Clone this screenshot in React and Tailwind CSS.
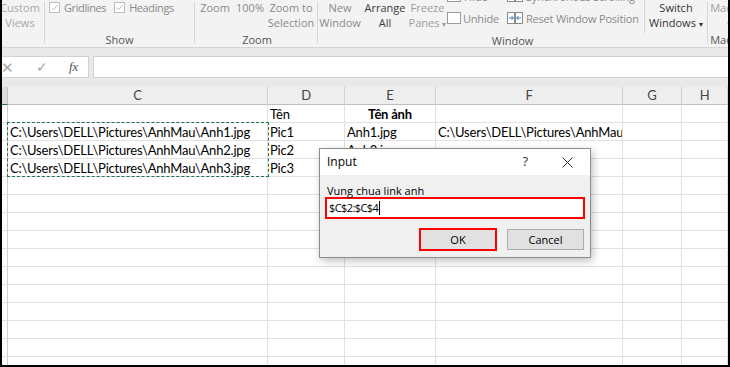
import clsx from 'clsx'

const ui = "font-['Open_Sans',sans-serif]"
const cellFont = "font-['Lato',sans-serif]"

function Sep({ short }) {
  return <div className={clsx('w-px shrink-0 bg-[#d6d6d6]', short ? 'mt-0 h-[33px]' : 'my-[2px] h-[41px]')} />
}

function Group({ className, label, children }) {
  return (
    <div className={clsx('flex shrink-0 flex-col', className)}>
      <div className="flex h-[33px]">{children}</div>
      <div className="text-center text-[#555]">{label}</div>
    </div>
  )
}

function Big({ w, top, bottom, color, caret }) {
  return (
    <div className={clsx('flex shrink-0 flex-col items-center whitespace-nowrap', w, color)}>
      <span>{top}</span>
      <span>
        {bottom}
        {caret && <span className="ml-[3px] text-[8px]">▾</span>}
      </span>
    </div>
  )
}

function Check() {
  return (
    <svg width="11" height="11" viewBox="0 0 11 11" className="shrink-0">
      <rect x="0.5" y="0.5" width="10" height="10" fill="#fff" stroke="#bdbdbd" />
      <path d="M2.5 5.8 L4.5 7.8 L8.6 3" fill="none" stroke="#bdbdbd" strokeWidth="1" />
    </svg>
  )
}

function Ribbon() {
  return (
    <div className={clsx('flex h-[48px] shrink-0 overflow-hidden border-b border-[#d5d5d5] bg-[#f3f3f3] text-[11px] leading-[15px]', ui)}>
      <Group className="w-[42px]" label="">
        <Big w="w-[36px]" top="Custom" bottom="Views" color="text-[#a8a8a8]" />
      </Group>
      <Sep />
      <Group className="w-[149px]" label="Show">
        <div className="flex h-[15px] items-center pl-[4px] tracking-[-0.4px] text-[#8a8a8a]">
          <Check />
          <span className="ml-[4px]">Gridlines</span>
          <span className="ml-[8px]">
            <Check />
          </span>
          <span className="ml-[4px]">Headings</span>
        </div>
      </Group>
      <Sep />
      <Group className="w-[122px] pl-[2px]" label="Zoom">
        <div className="flex text-[#8a8a8a]">
          <Big w="w-[36px]" top="Zoom" />
          <Big w="w-[34px]" top="100%" />
          <Big w="w-[48px]" top="Zoom to" bottom="Selection" />
        </div>
      </Group>
      <Sep />
      <Group className="w-[389px]" label="Window">
        <Big w="w-[44px]" top="New" bottom="Window" color="text-[#8a8a8a]" />
        <Big w="w-[46px]" top="Arrange" bottom="All" color="text-[#3c3c3c]" />
        <Big w="w-[39px]" top="Freeze" bottom="Panes" color="text-[#9c9c9c]" caret />
        <div className="-mt-[15px] flex w-[55px] shrink-0 flex-col text-[#8a8a8a]">
          <div className="flex h-[22px] items-center gap-[3px]">
            <svg width="14" height="12" viewBox="0 0 14 12">
              <rect x="0.5" y="0.5" width="13" height="11" fill="#fff" stroke="#9a9a9a" />
            </svg>
            <span>Hide</span>
          </div>
          <div className="flex h-[22px] items-center gap-[2px]">
            <svg width="14" height="12" viewBox="0 0 14 12">
              <rect x="0.5" y="0.5" width="13" height="11" fill="#fff" stroke="#9a9a9a" />
            </svg>
            <span className="tracking-[-0.2px]">Unhide</span>
          </div>
        </div>
        <div className="-mt-[15px] flex w-[142px] shrink-0 flex-col pl-[5px] tracking-[-0.2px] text-[#8a8a8a]">
          <div className="flex h-[22px] items-center gap-[3px]">
            <svg width="16" height="12" viewBox="0 0 16 12">
              <rect x="0.5" y="0.5" width="7" height="11" fill="#fff" stroke="#8a8a8a" />
              <rect x="8.5" y="0.5" width="7" height="11" fill="#fff" stroke="#8a8a8a" />
            </svg>
            <span>Synchronous Scrolling</span>
          </div>
          <div className="flex h-[22px] items-center gap-[3px]">
            <svg width="16" height="12" viewBox="0 0 16 12">
              <rect x="0.5" y="0.5" width="7" height="11" fill="#fff" stroke="#8a8a8a" />
              <rect x="8.5" y="0.5" width="7" height="11" fill="#fff" stroke="#8a8a8a" />
              <path d="M2 6h4M4.5 4l2 2-2 2" fill="none" stroke="#3d7ab8" />
              <path d="M14 6h-4M11.5 4l-2 2 2 2" fill="none" stroke="#3d7ab8" />
            </svg>
            <span>Reset Window Position</span>
          </div>
        </div>
        <Sep short />
        <Big w="w-[62px]" top="Switch" bottom="Windows" color="text-[#333]" caret />
      </Group>
      <Sep />
      <Group className="w-[42px]" label="Macros">
        <div className="flex w-[42px] flex-col items-center text-[#a0a0a0]">
          <span>Macros</span>
          <span className="text-[8px]">▾</span>
        </div>
      </Group>
    </div>
  )
}

function FormulaBar() {
  return (
    <div className="shrink-0 bg-[#e9e9e9] pt-[8px] pb-[9px]">
      <div className="flex h-[22px] gap-[4px]">
        <div className="flex w-[87px] items-center border border-l-0 border-[#d2d2d2] bg-white text-[#a5a5a5]">
          <span className="-ml-[1px] text-[15px] leading-none">✕</span>
          <span className="ml-[22px] text-[14px] leading-none">✓</span>
          <span className="ml-[21px] font-['Liberation_Serif',serif] text-[13px] italic text-[#555]">fx</span>
        </div>
        <div className="flex-1 border border-r-0 border-[#d2d2d2] bg-white" />
      </div>
    </div>
  )
}

const cols = ['', 'C', 'D', 'E', 'F', 'G', 'H']
const path = 'C:\\Users\\DELL\\Pictures\\AnhMau\\'

const rows = [
  { D: 'Tên', E: 'Tên ảnh' },
  { C: path + 'Anh1.jpg', D: 'Pic1', E: 'Anh1.jpg', F: 'C:\\Users\\DELL\\Pictures\\AnhMau' },
  { C: path + 'Anh2.jpg', D: 'Pic2', E: 'Anh2.jpg' },
  { C: path + 'Anh3.jpg', D: 'Pic3', E: 'Anh3.jpg' },
  ...Array.from({ length: 11 }, () => ({})),
]

function Sheet() {
  return (
    <div className={clsx('relative min-h-0 flex-1 overflow-hidden bg-white text-[13px] leading-[17px] tracking-[-0.2px] text-black', cellFont)}>
      <div className="grid grid-cols-[6px_260px_77px_91px_187px_59px_1fr]">
        {cols.map((c, i) => (
          <div
            key={c || 'corner'}
            className={clsx(
              'h-[18px] border-r border-b text-center text-[#444]',
              i === 0 ? 'border-r-[#c5c5c5] border-b-[#217346] bg-[#dcdcdc]' : 'border-r-[#d0d0d0] border-b-[#bfbfbf] bg-[#eeeeee]'
            )}
          >
            {c}
          </div>
        ))}
        {rows.map((r, ri) =>
          cols.map((c, ci) => (
            <div
              key={ri + '-' + ci}
              className={clsx(
                'h-[18px] overflow-hidden whitespace-nowrap border-b border-r border-[#e1e1e1] pt-[1px]',
                ci === 0 && 'border-r-[#d0d0d0]',
                c === 'E' && ri === 0 ? 'text-center font-bold' : 'pl-[2px]'
              )}
            >
              {c && r[c]}
            </div>
          ))
        )}
      </div>
      <div className="pointer-events-none absolute left-[5px] top-[35px] h-[55px] w-[262px] border border-dashed border-[#217346]" />
    </div>
  )
}

function InputDialog() {
  return (
    <div className={clsx('absolute left-[317px] top-[148px] w-[272px] border border-[#8c8c8c] bg-[#f0f0f0] shadow-[2px_3px_8px_rgba(0,0,0,0.25)]', ui)}>
      <div className="flex h-[26px] items-center bg-white pl-[7px] text-[12px] text-black">
        <span className="flex-1">Input</span>
        <span className="mr-[34px] text-[13px] text-[#333]">?</span>
        <svg width="11" height="11" viewBox="0 0 11 11" className="mr-[17px]">
          <path d="M0.5 0.5 L10.5 10.5 M10.5 0.5 L0.5 10.5" stroke="#333" strokeWidth="1" />
        </svg>
      </div>
      <div className="px-[5px] pb-[6px] pt-[9px] text-[11px] leading-[14px] text-black">
        <div className="pl-[2px]">Vung chua link anh</div>
        <div className="-mt-px flex h-[22px] items-center border-2 border-[#ff0000] bg-white pl-[2px]">
          <span className="tracking-[-0.6px]">$C$2:$C$4</span>
          <span className="ml-px h-[14px] w-px bg-black" />
        </div>
        <div className="mt-[9px] flex items-center justify-end gap-[10px] pr-px">
          <div className="h-[23px] w-[78px] border-2 border-[#ff0000]">
            <div className="flex h-full items-center justify-center bg-[#e1e1e1]">OK</div>
          </div>
          <div className="flex h-[21px] w-[77px] items-center justify-center border border-[#adadad] bg-[#e1e1e1]">Cancel</div>
        </div>
      </div>
    </div>
  )
}

export default function App() {
  return (
    <div className="relative flex h-[367px] w-[730px] flex-col overflow-hidden border-x-2 border-b-2 border-black bg-white">
      <Ribbon />
      <FormulaBar />
      <Sheet />
      <InputDialog />
    </div>
  )
}
